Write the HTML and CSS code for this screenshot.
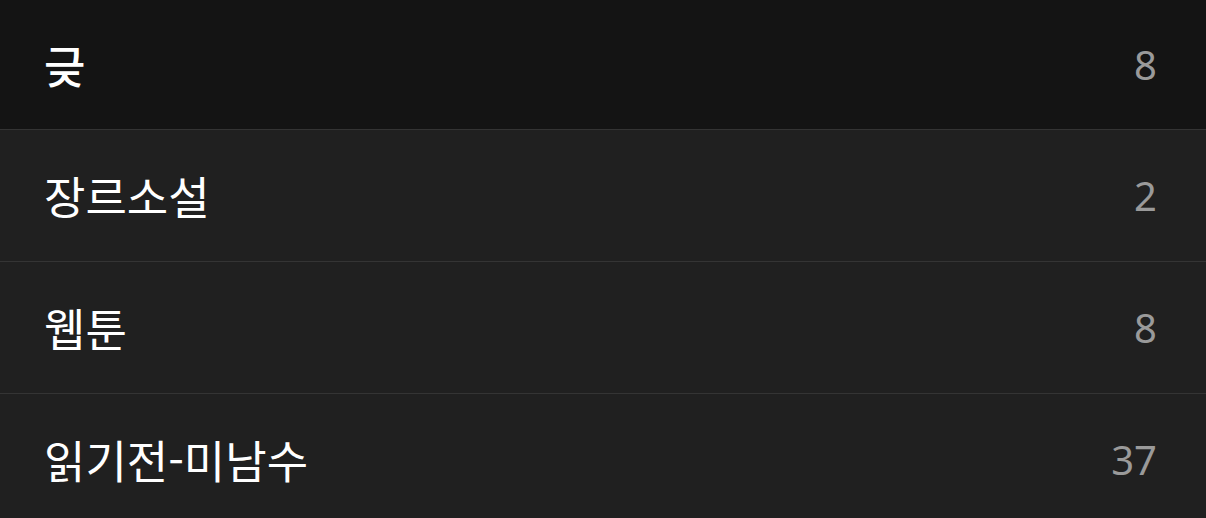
FILE: index.html
```
<!DOCTYPE html>
<html lang="ko">
<head>
<meta charset="utf-8">
<link rel="stylesheet" href="styles.css">
</head>
<body>
<ul class="list">
  <li class="row row-active"><span class="label bold">긎</span><span class="count">8</span></li>
  <li class="row"><span class="label">장르소설</span><span class="count">2</span></li>
  <li class="row"><span class="label">웹툰</span><span class="count">8</span></li>
  <li class="row"><span class="label">읽기전-미남수</span><span class="count">37</span></li>
</ul>
</body>
</html>
```
FILE: styles.css
```
html, body {
  margin: 0;
  padding: 0;
  background: #202020;
  height: 518px;
  overflow: hidden;
}
.list {
  list-style: none;
  margin: 0;
  padding: 0;
}
.row {
  display: flex;
  align-items: center;
  justify-content: space-between;
  height: 131px;
  padding: 0 49px 0 44px;
  background: #202020;
  border-bottom: 1px solid #343434;
}
.row-active {
  height: 129px;
  background: #141414;
}
.label {
  font-family: "Noto Sans CJK KR", "Noto Sans", sans-serif;
  font-size: 45px;
  color: #ffffff;
  line-height: 1;
}
.bold {
  font-weight: 500;
}
.count {
  font-family: "Noto Sans", sans-serif;
  font-size: 40px;
  font-weight: 400;
  color: #9a9a9a;
  line-height: 1;
}
```
